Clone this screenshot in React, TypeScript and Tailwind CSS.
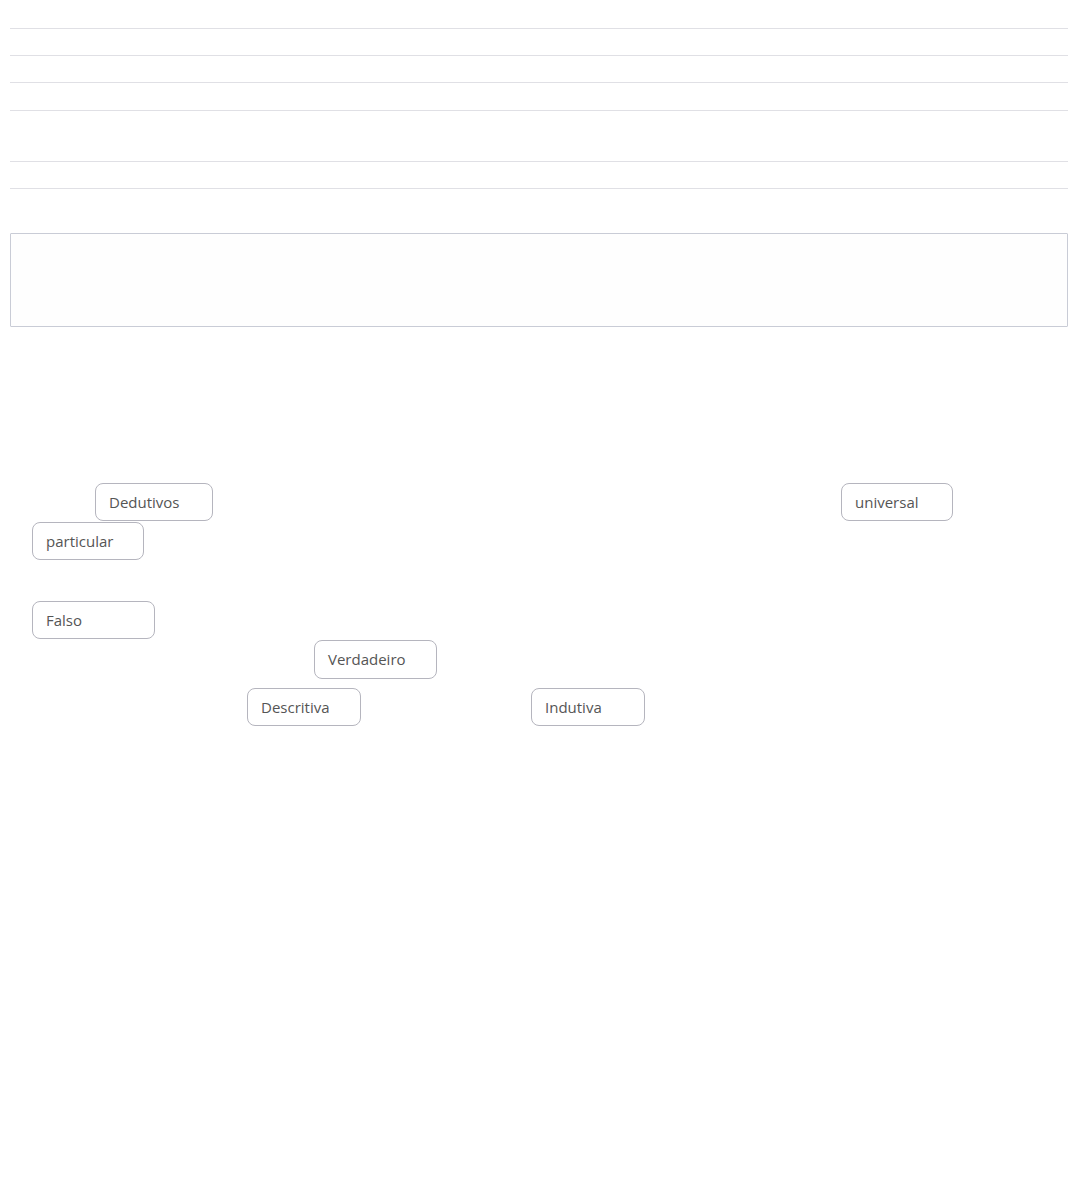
import React from "react";

type Chip = { label: string; x: number; y: number; w: number; h?: number };

const CHIPS: Chip[] = [
  { label: "Dedutivos", x: 95, y: 156, w: 118 },
  { label: "universal", x: 841, y: 156, w: 112 },
  { label: "particular", x: 32, y: 195, w: 112 },
  { label: "Falso", x: 32, y: 274, w: 123 },
  { label: "Verdadeiro", x: 314, y: 313, w: 123, h: 39 },
  { label: "Descritiva", x: 247, y: 361, w: 114 },
  { label: "Indutiva", x: 531, y: 361, w: 114 },
];

const ROWS = [27, 27, 28, 51, 27];

export default function App() {
  return (
    <div className="min-h-[1185px] bg-white pl-[10px] pr-[9px] pt-[28px] font-['Open_Sans','Noto_Sans',sans-serif]">
      <div className="flex flex-col">
        {ROWS.map((h, i) => (
          <div key={i} className="border-t border-[#e0e0e5]" style={{ height: h }} />
        ))}
        <div className="border-t border-[#e0e0e5]" />
      </div>

      <div className="mt-[44px] h-[94px] rounded-[1px] border border-[#c9ccd6] bg-[#fefefe]" />

      <div className="relative h-[500px]">
        {CHIPS.map((c) => (
          <div
            key={c.label}
            className="absolute flex items-center rounded-[8px] border border-[#b5b5be] bg-white pl-[13px] text-[15px] text-[#555555]"
            style={{ left: c.x - 10, top: c.y, width: c.w, height: c.h ?? 38 }}
          >
            {c.label}
          </div>
        ))}
      </div>
    </div>
  );
}
